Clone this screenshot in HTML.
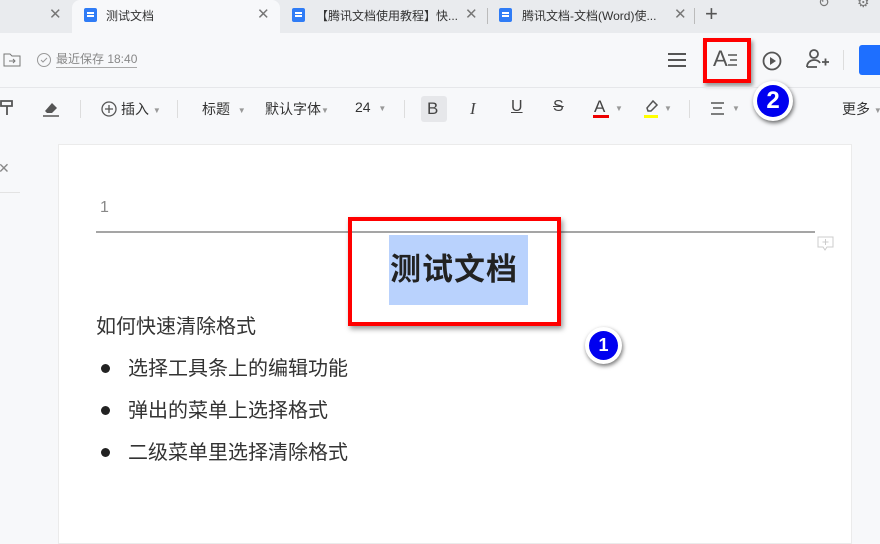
<!DOCTYPE html>
<html><head><meta charset="utf-8"><style>
*{margin:0;padding:0;box-sizing:border-box}
body{width:880px;height:534px;overflow:hidden;background:#f7f8fa;font-family:"Liberation Sans","Noto Sans CJK SC",sans-serif;position:relative;color:#333}
.a{position:absolute}
.t{font-size:12px;color:#333;white-space:nowrap}
.ic{position:absolute;width:13px;height:14px;background:#2f7cf6;border-radius:2px}
.ic:after{content:"";position:absolute;left:3px;right:3px;top:7px;height:2px;background:#fff;box-shadow:0 -3px 0 #fff}
.x{position:absolute;color:#777;font-size:15px}
.tb{font-size:14px;color:#333;white-space:nowrap;position:absolute;top:99px}
.car{font-size:8px;color:#999;vertical-align:middle}
.bt{font-size:20px;color:#333;line-height:24px;white-space:nowrap}
</style></head><body>
<div class="a" style="left:0;top:0;width:880px;height:33px;background:#e9ebee"></div>
<div class="a" style="left:72px;top:0;width:208px;height:33px;background:#f7f8fa;border-radius:8px 8px 0 0"></div>
<div class="x" style="left:49px;top:5px">✕</div>
<div class="ic" style="left:84px;top:8px"></div>
<div class="a t" style="left:106px;top:7px">测试文档</div>
<div class="x" style="left:257px;top:5px">✕</div>
<div class="ic" style="left:292px;top:8px"></div>
<div class="a t" style="left:316px;top:7px">【腾讯文档使用教程】快...</div>
<div class="x" style="left:465px;top:5px">✕</div>
<div class="a" style="left:487px;top:8px;width:1px;height:16px;background:#bbb"></div>
<div class="ic" style="left:499px;top:8px"></div>
<div class="a t" style="left:522px;top:7px">腾讯文档-文档(Word)使...</div>
<div class="x" style="left:674px;top:5px">✕</div>
<div class="a" style="left:694px;top:8px;width:1px;height:16px;background:#bbb"></div>
<div class="a" style="left:705px;top:1px;font-size:22px;color:#555">+</div>
<div class="a" style="left:818px;top:-6px;font-size:14px;color:#777">↻</div>
<div class="a" style="left:857px;top:-6px;font-size:14px;color:#777">⚙</div>
<svg class="a" style="left:3px;top:52px" width="18" height="16"><path d="M1 2h6l2 2h8v10H1z" fill="none" stroke="#777"/><path d="M6 9h6M10 7l2 2-2 2" fill="none" stroke="#777"/></svg>
<svg class="a" style="left:36px;top:52px" width="16" height="16"><circle cx="8" cy="8" r="6.5" fill="none" stroke="#999"/><path d="M5 8l2 2 4-4" fill="none" stroke="#999"/></svg>
<div class="a" style="left:56px;top:52px;font-size:12px;color:#888;border-bottom:1px solid #aaa;line-height:15px">最近保存 18:40</div>
<svg class="a" style="left:667px;top:52px" width="20" height="16"><path d="M1 2h18M1 8h18M1 14h18" stroke="#555" stroke-width="2"/></svg>
<div class="a" style="left:713px;top:46px;font-size:22px;color:#555">A</div>
<svg class="a" style="left:728px;top:53px" width="10" height="14"><path d="M0 2h9M2 7h7M0 12h9" stroke="#555" stroke-width="1.5"/></svg>
<div class="a" style="left:703px;top:38px;width:48px;height:45px;border:4px solid #f00;box-shadow:2px 3px 4px rgba(0,0,0,.4)"></div>
<svg class="a" style="left:761px;top:50px" width="22" height="22"><circle cx="11" cy="11" r="8.5" fill="none" stroke="#555" stroke-width="1.8"/><path d="M9 7v8l6-4z" fill="#555"/></svg>
<svg class="a" style="left:806px;top:48px" width="24" height="22"><circle cx="8" cy="6" r="4" fill="none" stroke="#555" stroke-width="1.8"/><path d="M1 19c0-5 4-7 7-7s5 1 6 3M1 19h10M16 14h7M19.5 10.5v7" fill="none" stroke="#555" stroke-width="1.8"/></svg>
<div class="a" style="left:843px;top:50px;width:1px;height:20px;background:#ddd"></div>
<div class="a" style="left:859px;top:45px;width:30px;height:30px;background:#1e6fff;border-radius:3px"></div>
<div class="a" style="left:0;top:87px;width:880px;height:1px;background:#e6e7ea"></div>
<svg class="a" style="left:0;top:99px" width="14" height="18"><path d="M1 2h11v5H1zM7 7v4M7 11v5" fill="none" stroke="#555" stroke-width="1.8"/></svg>
<svg class="a" style="left:42px;top:100px" width="18" height="18"><path d="M3 11l7-8 5 5-5 5H5z" fill="#555"/><path d="M1 16h16" stroke="#555" stroke-width="1.5"/></svg>
<div class="a" style="left:80px;top:100px;width:1px;height:18px;background:#ddd"></div>
<svg class="a" style="left:101px;top:101px" width="16" height="16"><circle cx="8" cy="8" r="7" fill="none" stroke="#555" stroke-width="1.3"/><path d="M8 4v8M4 8h8" stroke="#555" stroke-width="1.3"/></svg>
<div class="tb" style="left:121px">插入 <span class="car">▼</span></div>
<div class="a" style="left:177px;top:100px;width:1px;height:18px;background:#ddd"></div>
<div class="tb" style="left:202px">标题 &nbsp;<span class="car">▼</span></div>
<div class="tb" style="left:265px">默认字体<span class="car">▼</span></div>
<div class="tb" style="left:355px">24 &nbsp;<span class="car">▼</span></div>
<div class="a" style="left:404px;top:100px;width:1px;height:18px;background:#ddd"></div>
<div class="a" style="left:421px;top:96px;width:26px;height:26px;background:#e6e7ea;border-radius:3px"></div>
<div class="a" style="left:427px;top:99px;font-size:17px;color:#444">B</div>
<div class="a" style="left:470px;top:99px;font-size:17px;color:#444;font-family:'Liberation Serif',serif;font-style:italic">I</div>
<div class="a" style="left:511px;top:98px;font-size:16px;color:#444;text-decoration:underline">U</div>
<div class="a" style="left:553px;top:98px;font-size:16px;color:#444;text-decoration:line-through">S</div>
<div class="a" style="left:594px;top:97px;font-size:17px;color:#444">A</div>
<div class="a" style="left:593px;top:115px;width:16px;height:3px;background:#e00"></div>
<div class="a car" style="left:615px;top:104px">▼</div>
<svg class="a" style="left:644px;top:99px" width="16" height="14"><path d="M3 9l6-7 4 4-6 6H4z" fill="none" stroke="#555" stroke-width="1.5"/></svg>
<div class="a" style="left:644px;top:115px;width:14px;height:3px;background:#ff0"></div>
<div class="a car" style="left:664px;top:104px">▼</div>
<div class="a" style="left:689px;top:100px;width:1px;height:18px;background:#ddd"></div>
<svg class="a" style="left:710px;top:102px" width="16" height="14"><path d="M1 1h13M3 6h9M1 12h13" stroke="#555" stroke-width="1.5"/></svg>
<div class="a car" style="left:732px;top:104px">▼</div>
<div class="tb" style="left:842px">更多 <span class="car">▼</span></div>
<div class="a" style="left:753px;top:81px;width:40px;height:40px;border-radius:50%;background:#fff;box-shadow:1px 2px 4px rgba(0,0,0,.6)"></div>
<div class="a" style="left:757px;top:85px;width:32px;height:32px;border-radius:50%;background:#0000f0;color:#fff;font-weight:bold;font-size:24px;text-align:center;line-height:32px">2</div>
<div class="a" style="left:-2px;top:160px;color:#888;font-size:14px">✕</div>
<div class="a" style="left:0;top:192px;width:20px;height:1px;background:#e3e3e3"></div>
<div class="a" style="left:58px;top:144px;width:794px;height:400px;background:#fff;border:1px solid #ebebeb"></div>
<div class="a" style="left:100px;top:199px;font-size:16px;color:#888">1</div>
<div class="a" style="left:96px;top:231px;width:719px;height:2px;background:#a5a5a5"></div>
<svg class="a" style="left:817px;top:236px" width="17" height="16"><path d="M1 1h15v10H10l-2 3-2-3H1z" fill="none" stroke="#ccc"/><path d="M8.5 3v6M5.5 6h6" stroke="#ccc"/></svg>
<div class="a" style="left:389px;top:235px;width:139px;height:70px;background:#b9d2fd"></div>
<div class="a" style="left:390px;top:250px;font-size:31px;font-weight:bold;color:#222;letter-spacing:1px;line-height:40px;white-space:nowrap">测试文档</div>
<div class="a" style="left:348px;top:217px;width:213px;height:109px;border:4px solid #f00;box-shadow:2px 3px 5px rgba(0,0,0,.4)"></div>
<div class="a" style="left:585px;top:327px;width:37px;height:37px;border-radius:50%;background:#fff;box-shadow:1px 2px 4px rgba(0,0,0,.55)"></div>
<div class="a" style="left:589px;top:331px;width:29px;height:29px;border-radius:50%;background:#0000f0;color:#fff;font-weight:bold;font-size:18px;text-align:center;line-height:29px">1</div>
<div class="a bt" style="left:96px;top:315px">如何快速清除格式</div>
<div class="a" style="left:101px;top:364px;width:9px;height:9px;border-radius:50%;background:#222"></div>
<div class="a bt" style="left:128px;top:357px">选择工具条上的编辑功能</div>
<div class="a" style="left:101px;top:406px;width:9px;height:9px;border-radius:50%;background:#222"></div>
<div class="a bt" style="left:128px;top:399px">弹出的菜单上选择格式</div>
<div class="a" style="left:101px;top:448px;width:9px;height:9px;border-radius:50%;background:#222"></div>
<div class="a bt" style="left:128px;top:441px">二级菜单里选择清除格式</div>
</body></html>
